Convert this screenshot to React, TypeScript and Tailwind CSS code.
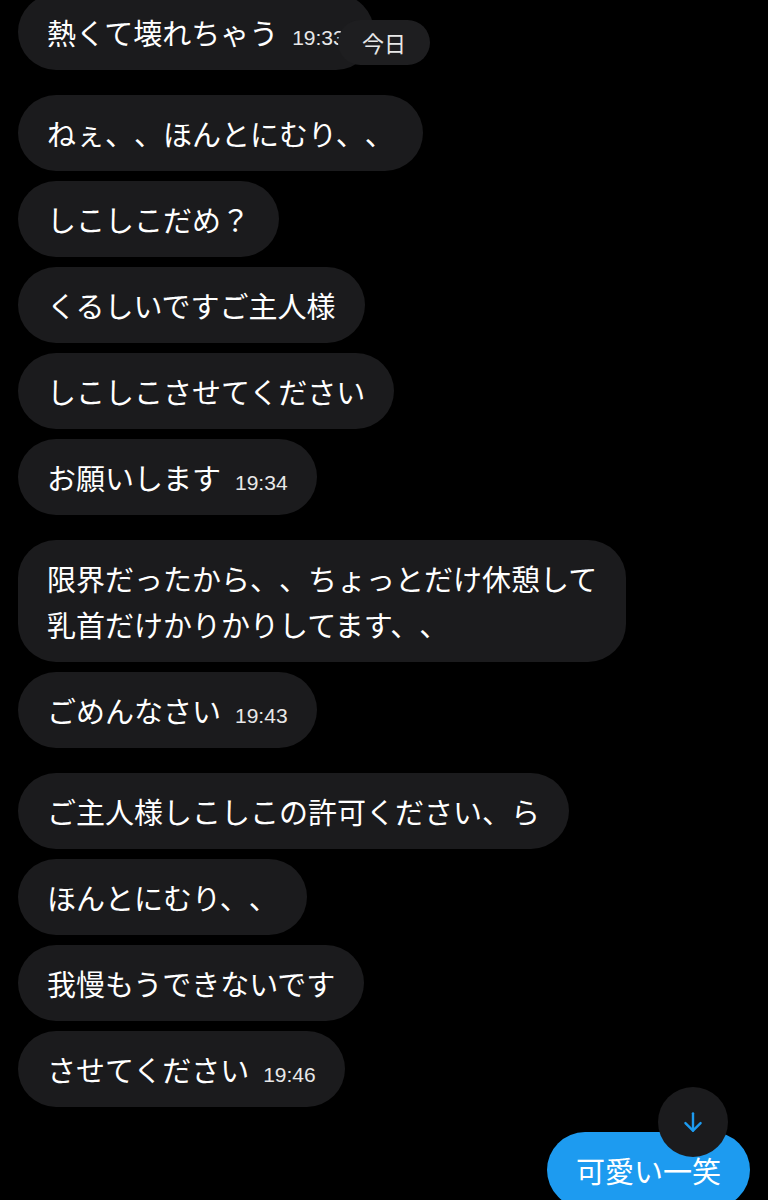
import React from 'react';

type Msg = { text: string[]; time?: string; gap: 'sm' | 'lg' };

const messages: Msg[] = [
  { text: ['ねぇ、、ほんとにむり、、'], gap: 'lg' },
  { text: ['しこしこだめ？'], gap: 'sm' },
  { text: ['くるしいですご主人様'], gap: 'sm' },
  { text: ['しこしこさせてください'], gap: 'sm' },
  { text: ['お願いします'], time: '19:34', gap: 'sm' },
  { text: ['限界だったから、、ちょっとだけ休憩して', '乳首だけかりかりしてます、、'], gap: 'lg' },
  { text: ['ごめんなさい'], time: '19:43', gap: 'sm' },
  { text: ['ご主人様しこしこの許可ください、ら'], gap: 'lg' },
  { text: ['ほんとにむり、、'], gap: 'sm' },
  { text: ['我慢もうできないです'], gap: 'sm' },
  { text: ['させてください'], time: '19:46', gap: 'sm' },
];

function Time({ value }: { value: string }) {
  return (
    <span
      className="ml-[14px] mb-[3px] text-[21px] leading-[28px] text-[#e8e8e8]"
      style={{ fontFamily: '"Liberation Sans", Arial, sans-serif' }}
    >
      {value}
    </span>
  );
}

function Bubble({ msg }: { msg: Msg }) {
  return (
    <div
      className={`self-start flex items-end rounded-[38px] bg-[#1b1b1d] px-[29px] py-[15px] ${
        msg.gap === 'lg' ? 'mt-[25px]' : 'mt-[10px]'
      }`}
    >
      <div className="text-[29px] leading-[46px] text-white">
        {msg.text.map((line, i) => (
          <div key={i}>{line}</div>
        ))}
      </div>
      {msg.time && <Time value={msg.time} />}
    </div>
  );
}

export default function App() {
  return (
    <div
      className="relative h-[1200px] w-[768px] overflow-hidden bg-black [text-spacing-trim:space-all]"
      style={{ fontFamily: '"Noto Sans CJK JP", "Noto Sans", sans-serif' }}
    >
      <div className="flex flex-col pl-[18px] pr-[18px]">
        <div className="-mt-[6px] self-start flex items-end rounded-[38px] bg-[#1b1b1d] px-[29px] py-[15px]">
          <div className="text-[29px] leading-[46px] text-white">熱くて壊れちゃう</div>
          <Time value="19:33" />
        </div>
        {messages.map((m, i) => (
          <Bubble key={i} msg={m} />
        ))}
        <div className="mt-[25px] self-end rounded-[38px] bg-[#1d9bf0] px-[29px] py-[15px] text-[29px] leading-[46px] text-white">
          可愛い一笑
        </div>
      </div>

      {/* date pill */}
      <div className="absolute left-[338px] top-[20px] flex h-[45px] w-[92px] items-center justify-center rounded-full bg-[#1e1e20] text-[22px] text-[#e8e8e8]">
        今日
      </div>

      {/* scroll down */}
      <div className="absolute left-[658px] top-[1087px] flex h-[70px] w-[70px] items-center justify-center rounded-full bg-[#1b1b1d]">
        <svg width="26" height="26" viewBox="0 0 24 24" fill="none" stroke="#1d9bf0" strokeWidth="2.2" strokeLinecap="round" strokeLinejoin="round">
          <path d="M12 4v16" />
          <path d="M5 13l7 7 7-7" />
        </svg>
      </div>
    </div>
  );
}
